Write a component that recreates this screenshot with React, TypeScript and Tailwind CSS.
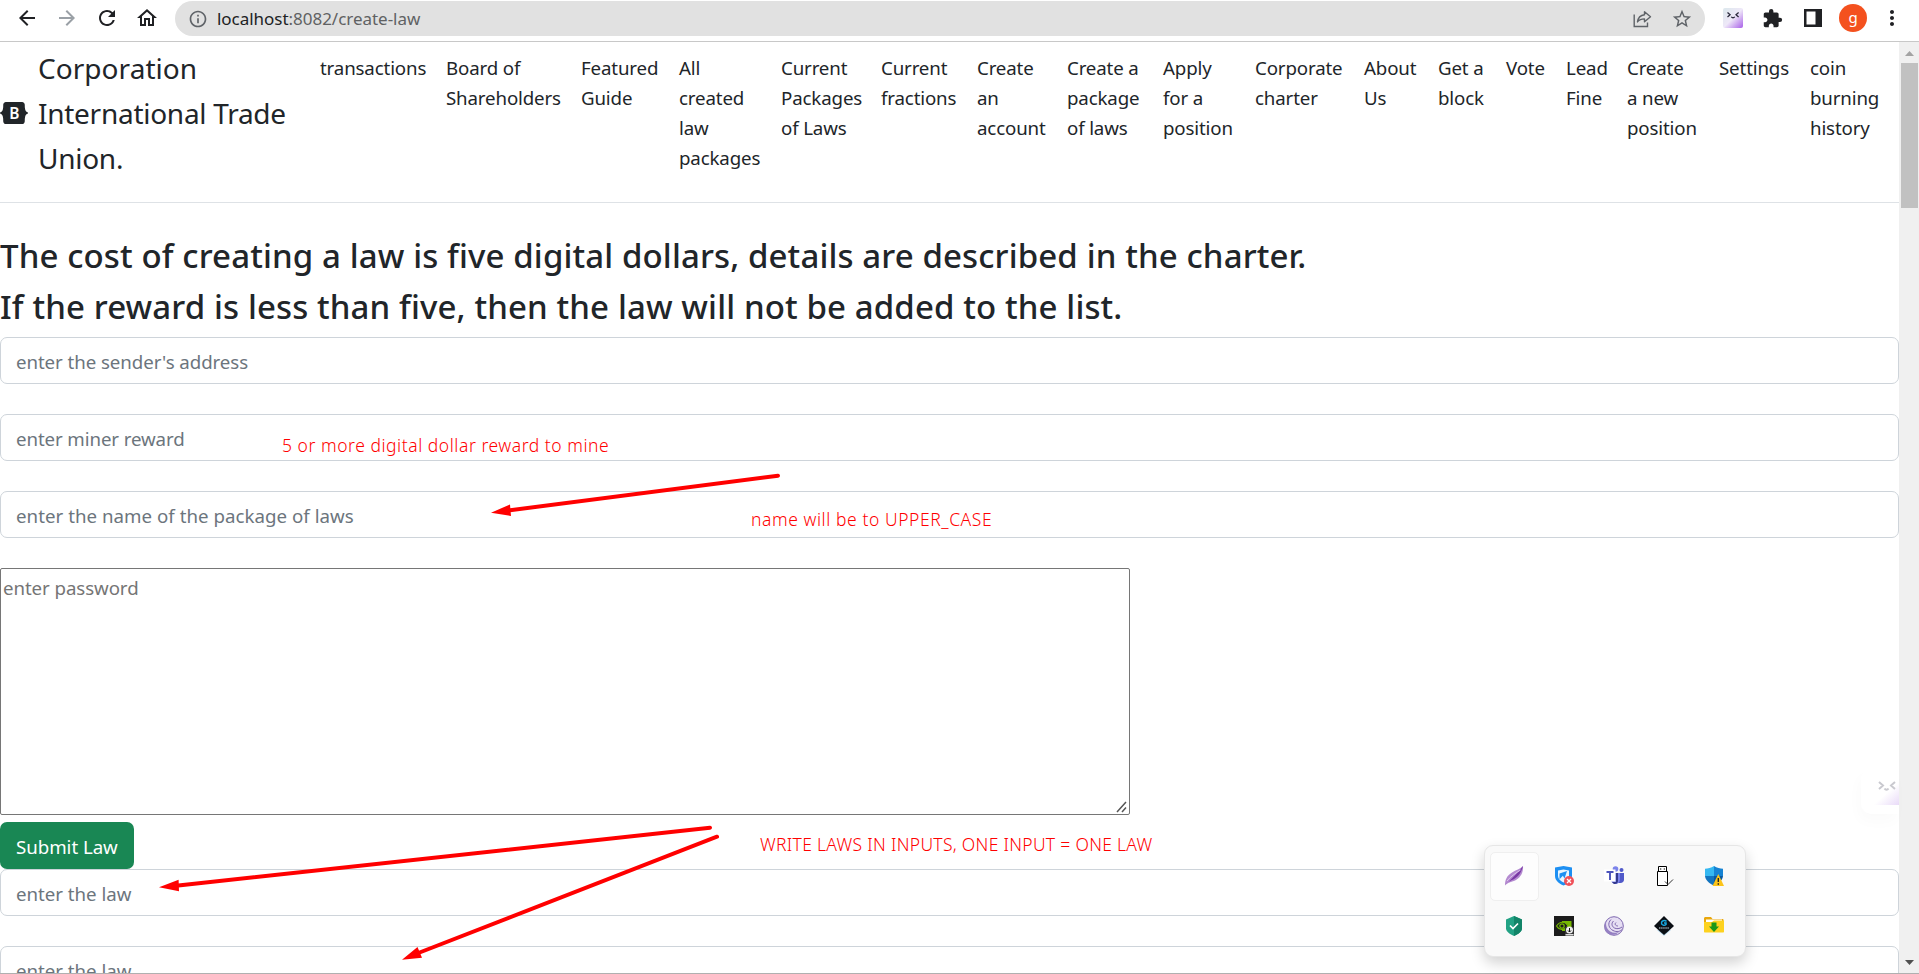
import React from "react";
import {
  MdArrowBack,
  MdArrowForward,
  MdRefresh,
  MdOutlineHome,
  MdInfoOutline,
  MdStarBorder,
  MdExtension,
  MdMoreVert,
} from "react-icons/md";

const FONT = "font-['Noto_Sans','Open_Sans',sans-serif]";

const NAV = [
  { w: "w-[126px]", lines: ["transactions"] },
  { w: "w-[135px]", lines: ["Board of", "Shareholders"] },
  { w: "w-[98px]", lines: ["Featured", "Guide"] },
  { w: "w-[102px]", lines: ["All", "created", "law", "packages"] },
  { w: "w-[100px]", lines: ["Current", "Packages", "of Laws"] },
  { w: "w-[96px]", lines: ["Current", "fractions"] },
  { w: "w-[90px]", lines: ["Create", "an", "account"] },
  { w: "w-[96px]", lines: ["Create a", "package", "of laws"] },
  { w: "w-[92px]", lines: ["Apply", "for a", "position"] },
  { w: "w-[109px]", lines: ["Corporate", "charter"] },
  { w: "w-[74px]", lines: ["About", "Us"] },
  { w: "w-[68px]", lines: ["Get a", "block"] },
  { w: "w-[60px]", lines: ["Vote"] },
  { w: "w-[61px]", lines: ["Lead", "Fine"] },
  { w: "w-[92px]", lines: ["Create", "a new", "position"] },
  { w: "w-[91px]", lines: ["Settings"] },
  { w: "w-[90px]", lines: ["coin", "burning", "history"] },
];

function Face({ className, id }: { className: string; id: string }) {
  return (
    <svg viewBox="0 0 20 20" className={className}>
      <defs>
        <linearGradient id={id} x1="0" y1="0" x2="1" y2="1">
          <stop offset="0.1" stopColor="#dfe8ee" />
          <stop offset="0.5" stopColor="#eee8f8" />
          <stop offset="1" stopColor="#a85ee8" />
        </linearGradient>
      </defs>
      <rect width="20" height="20" rx="2" fill={`url(#${id})`} />
      <g fill="none" stroke="#2b2b3c" strokeWidth="1.3">
        <path d="M4.5 4.5l2.6 2.3-2.6 2.3M15.6 4.5L13 6.8l2.6 2.3" />
        <path d="M8.3 8.7c.8 1.4 2.6 1.4 3.4 0" />
      </g>
    </svg>
  );
}

function Toolbar() {
  return (
    <div className="flex h-[42px] shrink-0 items-start border-b border-[#c8c8c8] bg-white">
      <div className="flex h-9 w-[175px] items-center gap-4 pl-[15px] text-[#202124]">
        <MdArrowBack className="size-6" />
        <MdArrowForward className="size-6 text-[#9aa0a6]" />
        <MdRefresh className="size-6" />
        <MdOutlineHome className="size-6" />
      </div>
      <div className="mt-px flex h-[35px] w-[1530px] items-center rounded-full bg-[#e1e1e1] pl-[13px] pr-3 text-[#5f6368]">
        <MdInfoOutline className="size-5" />
        <span className="ml-[9px] flex-1 text-[17px] tracking-[-0.03px] text-[#606163]">
          <span className="text-[#202124]">localhost</span>:8082/create-law
        </span>
        <svg viewBox="0 0 20 20" className="mr-[19px] size-5" fill="none" stroke="currentColor" strokeWidth="1.4">
          <path d="M2.200 5.500v12h13.300v-4" />
          <path d="M12.500 2.800l6 5-6 5v-2.900c-3.300 0-5.300.8-7 3 .5-4 2.800-6.700 7-7.200z" strokeLinejoin="round" />
        </svg>
        <MdStarBorder className="size-[22px]" />
      </div>
      <div className="flex h-9 flex-1 items-center pl-[18px] text-[#202124]">
        <Face id="ext" className="size-5" />
        <MdExtension className="ml-[19px] size-[21px]" />
        <svg viewBox="0 0 18 18" className="ml-[21px] size-[18px]">
          <path fill="#202124" d="M0 0h18v18H0zM2.500 2.500v13h9v-13z" fillRule="evenodd" />
        </svg>
        <span className="ml-[17px] flex size-7 items-center justify-center rounded-full bg-[#f4511e] pb-0.5 text-[15px] leading-none text-white">
          g
        </span>
        <MdMoreVert className="ml-[13px] size-6" />
      </div>
    </div>
  );
}

function Field({ text, track }: { text: string; track: string }) {
  return (
    <div
      className={`mb-[30px] flex h-[47px] shrink-0 items-start rounded-[7px] border border-[#ced4da] bg-white pl-[15px] pt-[9px] text-[18.7px] leading-[30px] text-[#6c757d] ${track}`}
    >
      {text}
    </div>
  );
}

function Tray() {
  return (
    <div className="absolute left-[1484px] top-[845px] grid h-28 w-[262px] grid-cols-5 place-items-center content-start rounded-[9px] border border-[#e6e6e6] bg-[#f9f9f9] pl-1 pr-[6px] pt-[5px] shadow-[0_6px_14px_rgba(0,0,0,0.18)]">
      <span className="flex size-[50px] items-center justify-center">
        <span className="flex size-[49px] items-center justify-center rounded-[5px] border border-[#efefef] bg-[#fdfdfd]">
          <svg viewBox="0 0 20 20" className="size-5">
            <path d="M1 19.500c0-6 2-10 7-13C12 4 16 3 19 0c.5 6-2 11-7 14-4 2-8 2-11 5.500z" fill="#b48ad0" />
            <path d="M1 19.500C6 14 12 9 19 0c-2 8-6 12-11 14-3 1.200-5 3-7 5.500z" fill="#7a3aa5" />
            <path d="M3 15C7 10 12 7 16.500 4" stroke="#dcc4ec" strokeWidth="1" fill="none" />
          </svg>
        </span>
      </span>
      <span className="flex size-[50px] items-center justify-center">
        <svg viewBox="0 0 20 20" className="size-5">
          <path d="M1 1.500L9.500 0 18 1.500V10c0 4-3.500 7.500-8.500 9.500C4.500 17.500 1 14 1 10z" fill="#1d8ff2" />
          <path d="M4 4.500l5.500-1 5.500 1V10c0 3-2.500 5-5.500 6.500C6.500 15 4 13 4 10z" fill="#e8f5ff" />
          <path d="M5.500 7.500L13 5l-2.500 7.500-1.600-2.800-3.400 3.500zM1 5.500l5 .5" fill="#1d8ff2" />
          <circle cx="15" cy="15" r="5" fill="#f0525a" />
          <path d="M13 13l4 4M17 13l-4 4" stroke="#fff" strokeWidth="1.300" />
        </svg>
      </span>
      <span className="flex size-[50px] items-center justify-center">
        <svg viewBox="0 0 20 20" className="size-5">
          <circle cx="11.500" cy="3" r="2.800" fill="#7b83eb" />
          <circle cx="17.500" cy="4" r="2" fill="#5059c9" />
          <path d="M14 7h6v6.500c0 2-1.500 3.500-3.500 3.500H14z" fill="#5059c9" />
          <path d="M7 7h9v6c0 3-2 5-4.500 5S7 16 7 13z" fill="#7b83eb" />
          <path d="M12 7v9H8l2 2c2 .5 4-1 4-3V7z" fill="#343a8c" />
          <path d="M0 3.500h11.500v12H0z" fill="#fff" />
          <path d="M2.500 6h7M6 6v8" stroke="#4b53bc" strokeWidth="1.900" />
        </svg>
      </span>
      <span className="flex size-[50px] items-center justify-center">
        <svg viewBox="0 0 20 20" className="size-5" fill="none" stroke="#000" strokeWidth="1">
          <path d="M4.500 .5h8v5h-8zM3.500 5.500h10v14h-10z" fill="#fff" />
          <path d="M6 3h1.300M9.700 3H11" strokeWidth="1.200" />
          <path d="M11 15.500l3 3 5-5" stroke="#333" />
        </svg>
      </span>
      <span className="flex size-[50px] items-center justify-center">
        <svg viewBox="0 0 20 20" className="size-5">
          <path d="M10 0C7 2 4 2.600 1 2.700V10h9z" fill="#35b8f1" />
          <path d="M10 0c3 2 6 2.600 9 2.700V10h-9z" fill="#1683d3" />
          <path d="M1 10h9v9.500C5 17.500 1.500 14 1 10z" fill="#1274bf" />
          <path d="M19 10h-9v9.500c5-2 8.500-5.500 9-9.500z" fill="#0a59a0" />
          <path d="M14.300 8L20 20H8.500z" fill="#fcc419" />
          <path d="M14.300 12v4M14.300 17.300v1.400" stroke="#222" strokeWidth="1.400" />
        </svg>
      </span>
      <span className="flex size-[50px] items-center justify-center">
        <svg viewBox="0 0 20 20" className="size-5">
          <path d="M10 0l8 3.500v9c0 3-4 6-8 7.500-4-1.500-8-4.500-8-7.500v-9z" fill="#22a284" />
          <path d="M10 0l8 3.500v9c0 3-4 6-8 7.500z" fill="#128468" />
          <path d="M6 9.500l3 3 5-5" stroke="#fff" strokeWidth="1.700" fill="none" />
        </svg>
      </span>
      <span className="flex size-[50px] items-center justify-center">
        <svg viewBox="0 0 20 20" className="size-5">
          <path d="M0 0h20v20H0z" fill="#1c1c1c" />
          <path d="M8 5h9.500v10H8z" fill="#76b900" />
          <path d="M2.500 10C6 5 11 5 14 10c-4 5-9 4-11.500 0z" fill="#1c1c1c" stroke="#76b900" strokeWidth="1.200" />
          <circle cx="8" cy="10" r="2.200" fill="none" stroke="#76b900" strokeWidth="1.200" />
          <path d="M11 11h9v9h-9z" fill="#333" />
          <circle cx="15.500" cy="14" r="3.500" fill="#eee" />
          <path d="M11.500 18h8v1.500h-8z" fill="#ddd" />
          <path d="M15.500 12v4M14 14.500l1.500 1.500 1.500-1.500" stroke="#111" fill="none" />
        </svg>
      </span>
      <span className="flex size-[50px] items-center justify-center">
        <svg viewBox="0 0 20 20" className="size-5" fill="none" stroke="#7d66ae">
          <circle cx="10" cy="10" r="9.300" fill="#e6def3" strokeWidth="1" />
          <path d="M7 1.500C2 3 1 8 3 12s7 6 12 4c-4 4-10 3.500-13 0S0 4 7 1.500z" fill="#9580c2" stroke="none" />
          <path d="M7 3.500c-4 4-2 9 2 11s7 1 9-1M9.500 5c-3 3-1 6 1 7s5 1 7.500-1M12 6.500c-2 2 0 3.500 2 3.500" />
        </svg>
      </span>
      <span className="flex size-[50px] items-center justify-center">
        <svg viewBox="0 0 20 20" className="size-5">
          <path d="M3 14h14l-7 6z" fill="#bcdcf0" />
          <path d="M10 0l10 10-6 5.500L10 19l-4-3.500L0 10z" fill="#0b0f14" />
          <path d="M12.500 5.300c-2-1.500-5-.5-5 1.700s3 3 4.500 1.500V7H10" stroke="#18a8e0" strokeWidth="1.500" fill="none" />
          <path d="M5 12h10" stroke="#8d9aa3" strokeWidth="1.300" strokeDasharray="1.500 .6" />
        </svg>
      </span>
      <span className="flex size-[50px] items-center justify-center">
        <svg viewBox="0 0 20 20" className="size-5">
          <path d="M0 2.500C0 1.600.6 1 1.500 1H7l1.500 2h10c.6 0 1 .4 1 1v3H0z" fill="#e9a70c" />
          <path d="M2 3.500h16V8H2z" fill="#fff" />
          <path d="M0 6h8l2-1.500h10v11c0 .6-.4 1-1 1H1c-.6 0-1-.4-1-1z" fill="#fdd21f" />
          <path d="M7.500 6.500h5v4H15l-5 5.500-5-5.500h2.500z" fill="#189818" />
        </svg>
      </span>
    </div>
  );
}

export default function App() {
  return (
    <div className={`relative flex h-[974px] w-[1919px] flex-col overflow-hidden bg-white text-[#212529] ${FONT}`}>
      <Toolbar />
      <div className="flex min-h-0 flex-1 border-b border-[#b0b0b0]">
        <main className="flex w-[1899px] flex-col overflow-hidden">
          <header className="flex h-[161px] shrink-0 border-b border-[#dee2e6] pt-1">
            <div className="flex h-[135px] w-[310px] shrink-0 items-center">
              <svg viewBox="0 0 118 94" className="-mt-0.5 h-[22px] w-7 shrink-0">
                <path
                  fill="#212529"
                  d="M24.509 0c-6.733 0-11.715 5.893-11.492 12.284.214 6.140-.064 14.092-2.066 20.577C8.943 39.365 5.547 43.485 0 44.014v5.972c5.547.529 8.943 4.649 10.951 11.153 2.002 6.485 2.280 14.437 2.066 20.577C12.794 88.106 17.776 94 24.510 94H93.500c6.733 0 11.714-5.893 11.491-12.284-.214-6.140.064-14.092 2.066-20.577 2.009-6.504 5.396-10.624 10.943-11.153v-5.972c-5.547-.529-8.934-4.649-10.943-11.153-2.002-6.484-2.280-14.437-2.066-20.577C105.214 5.894 100.233 0 93.500 0H24.508z"
                />
                <text x="60" y="71" textAnchor="middle" fontSize="66" fontWeight="600" fill="#fff">
                  B
                </text>
              </svg>
              <div className="ml-[10px] text-[28px] leading-[45px] tracking-[-0.27px]">
                <span className="tracking-[0.05px]">Corporation</span>
                <br />
                International Trade
                <br />
                Union.
              </div>
            </div>
            <nav className="flex pt-[7px] text-[18.7px] leading-[30px] tracking-[-0.14px]">
              {NAV.map((n, i) => (
                <a key={i} className={`block shrink-0 whitespace-nowrap pl-[10px] ${n.w}`}>
                  {n.lines.map((l) => (
                    <span key={l} className="block">
                      {l}
                    </span>
                  ))}
                </a>
              ))}
            </nav>
          </header>
          <section className="flex flex-col pt-8">
            <h3 className="mb-[9px] whitespace-nowrap text-[33px] font-medium leading-[42px] tracking-[0.12px]">
              The cost of creating a law is five digital dollars, details are described in the charter.
            </h3>
            <h3 className="mb-[9px] whitespace-nowrap text-[33px] font-medium leading-[42px] tracking-[0.12px]">
              If the reward is less than five, then the law will not be added to the list.
            </h3>
            <Field text="enter the sender's address" track="tracking-[-0.07px]" />
            <Field text="enter miner reward" track="tracking-[-0.1px]" />
            <Field text="enter the name of the package of laws" track="tracking-[0.03px]" />
            <div className="mb-[7px] flex h-[247px] w-[1130px] shrink-0 justify-between rounded-[2px] border border-[#767676] pl-[2px] pt-1 text-[18.7px] leading-[30px] tracking-[-0.08px] text-[#757575]">
              enter password
              <svg viewBox="0 0 12 12" className="mb-px mr-px size-3 self-end" stroke="#555" strokeWidth="1.500">
                <path d="M1 11L10 1M6 11l4-4.500" />
              </svg>
            </div>
            <button className="flex h-[47px] w-[134px] shrink-0 items-center rounded-[7px] bg-[#198754] pl-4 pt-[3px] text-[18.7px] tracking-[-0.04px] text-white">
              Submit Law
            </button>
            <Field text="enter the law" track="tracking-[-0.02px]" />
            <Field text="enter the law" track="tracking-[-0.02px]" />
          </section>
        </main>
        <div className="flex w-5 shrink-0 flex-col items-center justify-between bg-[#f0f0f0] pb-2">
          <div className="flex flex-col items-center">
            <svg viewBox="0 0 9 5" className="mb-[7px] mt-[9px] h-[5px] w-[9px]">
              <path d="M4.500 0L9 5H0z" fill="#a3a3a3" />
            </svg>
            <div className="h-[145px] w-[17px] bg-[#c1c1c1]" />
          </div>
          <svg viewBox="0 0 9 5" className="h-[5px] w-[9px]">
            <path d="M4.500 5L9 0H0z" fill="#505050" />
          </svg>
        </div>
      </div>

      <div className="absolute left-[1861px] top-[768px] h-[46px] w-[38px] overflow-hidden rounded-l-[10px] bg-white shadow-[-3px_8px_14px_rgba(0,0,0,0.02)]">
        <svg viewBox="0 0 38 46" className="h-[46px] w-[38px]">
          <defs>
            <linearGradient id="float" x1="0.2" y1="0.2" x2="1" y2="1">
              <stop offset="0.4" stopColor="#fff" />
              <stop offset="1" stopColor="#e6d6f7" />
            </linearGradient>
          </defs>
          <rect x="11" y="10" width="30" height="27" rx="3" fill="url(#float)" />
          <g fill="none" stroke="#c9c9cf" strokeWidth="2">
            <path d="M18 14l4 3.500-4 3.500M34 14l-4 3.500 4 3.500M23.500 20.500c1 1.600 3 1.600 4 0" />
          </g>
        </svg>
      </div>

      <svg viewBox="0 0 1919 974" className="pointer-events-none absolute inset-0 h-[974px] w-[1919px]" stroke="#f00" fill="#f00">
        <path d="M778 475.700L508 510.500M710 827.700L176 885.800M717 836.700L417 953.500" strokeWidth="4" strokeLinecap="round" />
        <path stroke="none" d="M491 512.700L510 504.500L511 516zM159 887.300L178.600 879.700L179 891.300zM402 959.700L417.500 947L422 957.700z" />
      </svg>
      <div className="absolute left-[282px] top-[432px] whitespace-nowrap text-[17.5px] font-light leading-[26px] tracking-[0.54px] text-[#f00]">
        5 or more digital dollar reward to mine
      </div>
      <div className="absolute left-[751px] top-[506px] whitespace-nowrap text-[17.5px] font-light leading-[26px] tracking-[0.57px] text-[#f00]">
        name will be to UPPER_CASE
      </div>
      <div className="absolute left-[760px] top-[831px] whitespace-nowrap text-[17.5px] font-light leading-[26px] tracking-[0.3px] text-[#f00]">
        WRITE LAWS IN INPUTS, ONE INPUT = ONE LAW
      </div>
      <Tray />
    </div>
  );
}
